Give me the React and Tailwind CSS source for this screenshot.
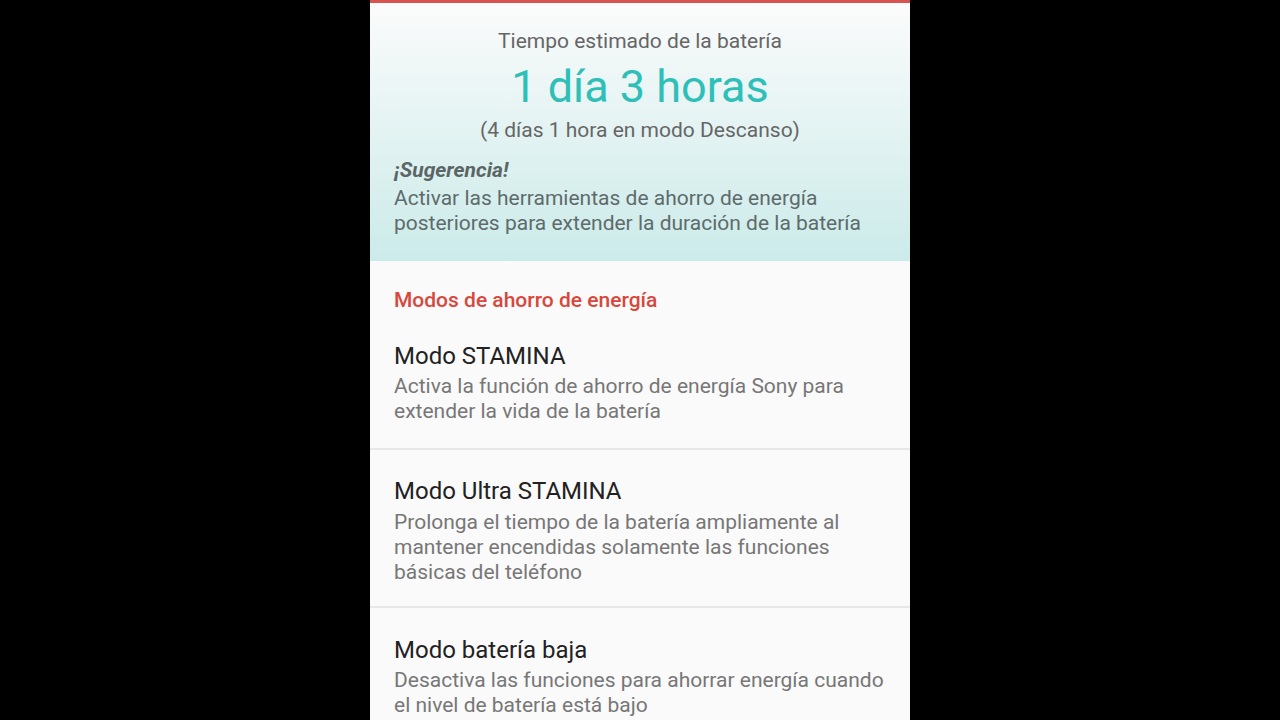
export default function App() {
  const items = [
    {
      title: "Modo STAMINA",
      pad: "pt-[30px] pb-[24px]",
      mt: "mt-[4px]",
      desc: ["Activa la función de ahorro de energía Sony para", "extender la vida de la batería"],
    },
    {
      title: "Modo Ultra STAMINA",
      pad: "pt-[27px] pb-[21px]",
      mt: "mt-[5px]",
      desc: [
        "Prolonga el tiempo de la batería ampliamente al",
        "mantener encendidas solamente las funciones",
        "básicas del teléfono",
      ],
    },
    {
      title: "Modo batería baja",
      pad: "pt-[28px] pb-[24px]",
      mt: "mt-[4px]",
      desc: ["Desactiva las funciones para ahorrar energía cuando", "el nivel de batería está bajo"],
    },
  ];
  return (
    <div className="w-[1280px] h-[720px] bg-black overflow-hidden" style={{ fontFamily: "Roboto, 'Noto Sans', sans-serif" }}>
      <div className="w-[540px] h-[720px] mx-auto bg-[#fafafa] flex flex-col overflow-hidden">
        <div className="h-[3px] bg-[#d9534f] shrink-0" />
        <div className="bg-gradient-to-b from-[#fbfbfb] to-[#cbebea] pt-[25px] pb-[25px] px-[24px] shrink-0">
          <div className="text-center text-[21px] leading-[26px] text-[#666]">Tiempo estimado de la batería</div>
          <div className="text-center text-[45px] leading-[52px] text-[#2dbfb8] mt-[7px]">1 día 3 horas</div>
          <div className="text-center text-[21px] leading-[26px] text-[#666] mt-[4px]">(4 días 1 hora en modo Descanso)</div>
          <div className="text-[21px] leading-[25px] text-[#5a6565] italic font-bold mt-[15px]">¡Sugerencia!</div>
          <div className="text-[21px] leading-[25px] text-[#5f6b6b] mt-[3px]">
            <div>Activar las herramientas de ahorro de energía</div>
            <div>posteriores para extender la duración de la batería</div>
          </div>
        </div>
        <div className="px-[24px] pt-[27px] text-[21px] leading-[24px] font-medium text-[#d9473c]">Modos de ahorro de energía</div>
        <div className="flex flex-col">
          {items.map((it, i) => (
            <div key={i} className={i > 0 ? "border-t-2 border-[#e8e8e8]" : ""}>
              <div className={it.pad + " px-[24px]"}>
                <div className="text-[24px] leading-[28px] text-[#222]">{it.title}</div>
                <div className={"text-[21px] leading-[25px] text-[#777] " + it.mt}>
                  {it.desc.map((d, j) => (
                    <div key={j}>{d}</div>
                  ))}
                </div>
              </div>
            </div>
          ))}
        </div>
      </div>
    </div>
  );
}
